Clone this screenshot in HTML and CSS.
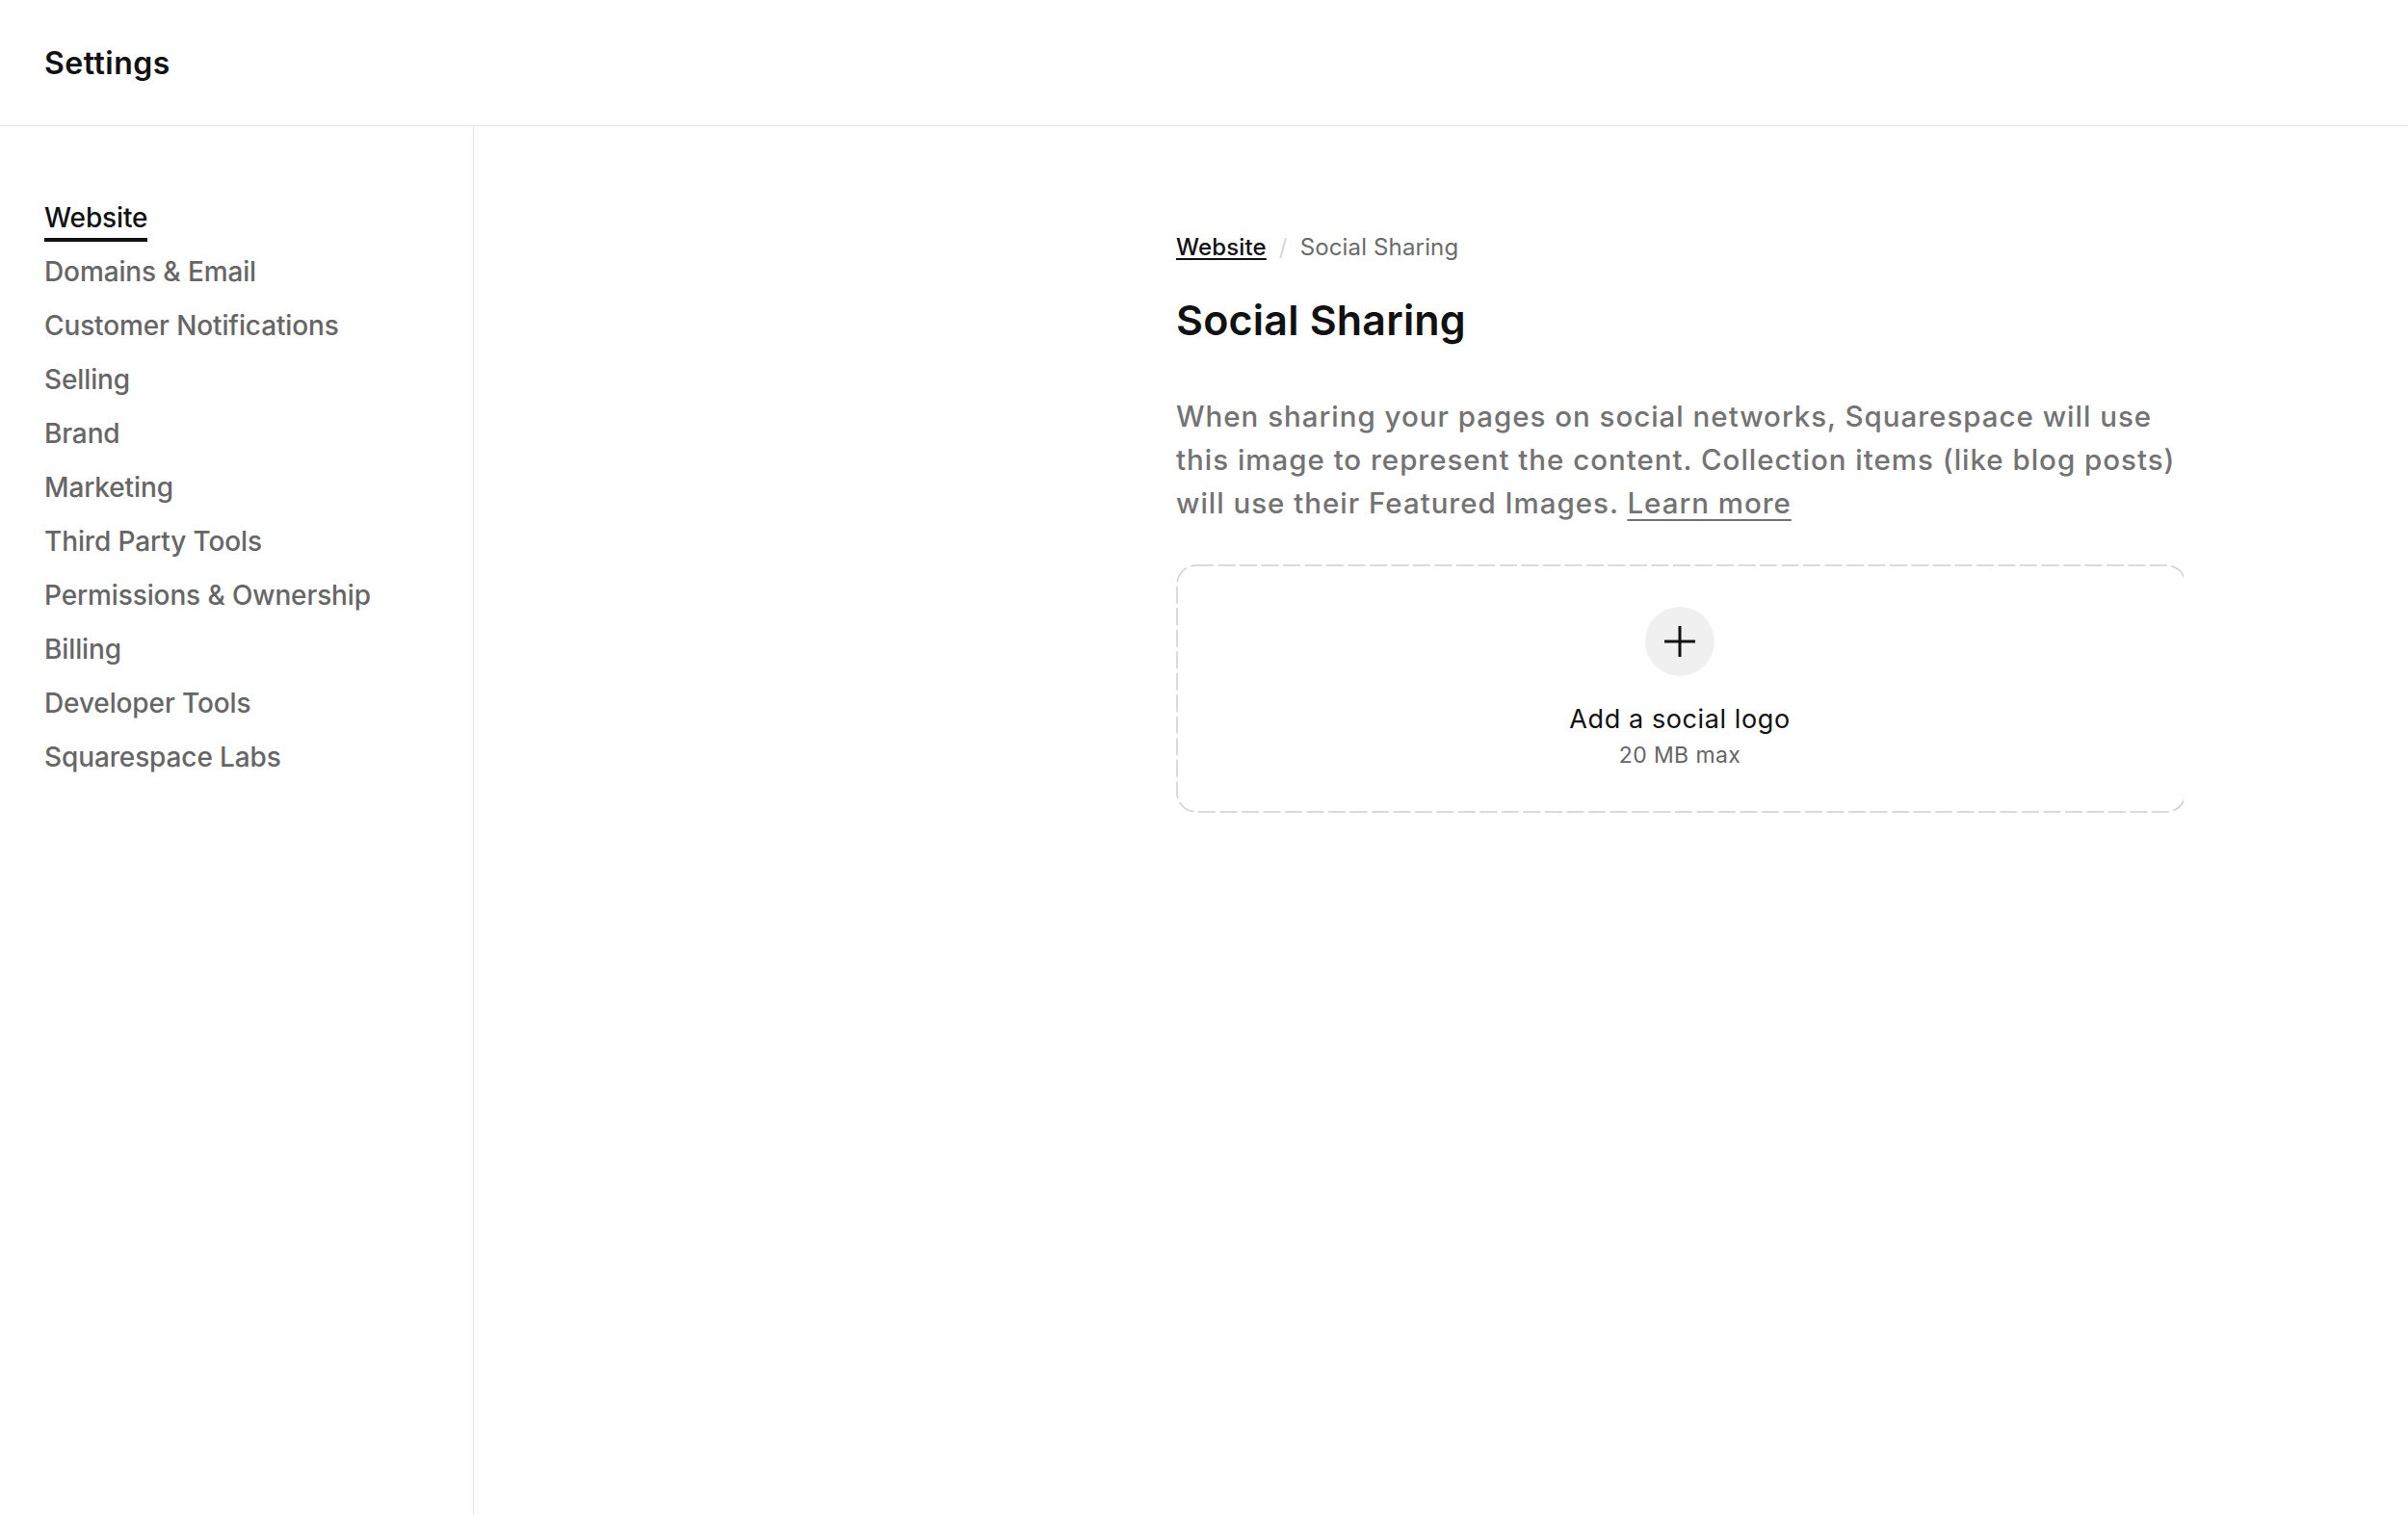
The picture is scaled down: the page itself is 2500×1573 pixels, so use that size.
FILE: index.html
```html
<!DOCTYPE html>
<html lang="en">
<head>
<meta charset="utf-8">
<title>Settings – Social Sharing</title>
<link rel="stylesheet" href="styles.css">
</head>
<body>
  <header class="topbar">
    <h1 class="topbar-title">Settings</h1>
  </header>
  <div class="layout">
    <nav class="sidebar">
      <ul class="nav">
        <li class="nav-item"><a class="nav-link active">Website</a></li>
        <li class="nav-item"><a class="nav-link">Domains &amp; Email</a></li>
        <li class="nav-item"><a class="nav-link">Customer Notifications</a></li>
        <li class="nav-item"><a class="nav-link">Selling</a></li>
        <li class="nav-item"><a class="nav-link">Brand</a></li>
        <li class="nav-item"><a class="nav-link">Marketing</a></li>
        <li class="nav-item"><a class="nav-link">Third Party Tools</a></li>
        <li class="nav-item"><a class="nav-link">Permissions &amp; Ownership</a></li>
        <li class="nav-item"><a class="nav-link">Billing</a></li>
        <li class="nav-item"><a class="nav-link">Developer Tools</a></li>
        <li class="nav-item"><a class="nav-link">Squarespace Labs</a></li>
      </ul>
    </nav>
    <main class="main">
      <div class="content">
        <div class="breadcrumb">
          <a class="crumb-link">Website</a>
          <span class="crumb-sep">/</span>
          <span class="crumb-current">Social Sharing</span>
        </div>
        <h2 class="page-title">Social Sharing</h2>
        <p class="description">When sharing your pages on social networks, Squarespace will use this image to represent the content. Collection items (like blog posts) will use their Featured Images. <a class="learn-more">Learn more</a></p>
        <div class="dropzone">
          <svg class="dropzone-border" width="1046" height="258" viewBox="0 0 1046 258" aria-hidden="true">
            <rect x="1" y="1" width="1047" height="256" rx="20" ry="20" fill="none" stroke="#cfcfcf" stroke-width="1.5" stroke-dasharray="18 4.5"/>
          </svg>
          <div class="add-circle">
            <svg width="32" height="32" viewBox="0 0 32 32" aria-hidden="true">
              <path d="M16 0V32M0 16H32" stroke="#111" stroke-width="3" fill="none"/>
            </svg>
          </div>
          <div class="add-label">Add a social logo</div>
          <div class="add-hint">20 MB max</div>
        </div>
      </div>
    </main>
  </div>
</body>
</html>
```

FILE: styles.css
```css
* { box-sizing: border-box; }

html, body {
  margin: 0;
  padding: 0;
  background: #fff;
}

body {
  font-family: Inter, "Liberation Sans", Arial, sans-serif;
  color: #111;
  width: 2500px;
  height: 1573px;
  overflow: hidden;
}

.topbar {
  height: 131px;
  border-bottom: 1px solid #e5e5e5;
  padding: 0 46px;
  display: flex;
  align-items: center;
}

.topbar-title {
  margin: 0;
  font-size: 32px;
  font-weight: 600;
  letter-spacing: 0.5px;
  line-height: 40px;
  color: #111;
  position: relative;
  top: 1px;
}

.layout {
  display: flex;
  height: 1442px;
}

.sidebar {
  width: 492px;
  flex: 0 0 492px;
  border-right: 1px solid #e5e5e5;
  padding: 75px 0 0 46px;
}

.nav {
  list-style: none;
  margin: 0;
  padding: 0;
}

.nav-item {
  height: 56px;
  font-size: 28px;
  line-height: 40px;
  font-weight: 500;
  letter-spacing: -0.12px;
}

.nav-link {
  color: #666;
  text-decoration: none;
  display: inline-block;
}

.nav-link.active {
  color: #111;
  padding-bottom: 1px;
  border-bottom: 4px solid #111;
}

.main {
  flex: 1;
  padding: 110px 0 0 729px;
}

.content {
  width: 1046px;
}

.breadcrumb {
  display: flex;
  align-items: baseline;
  font-size: 24px;
  line-height: 32px;
  letter-spacing: 0.15px;
}

.crumb-link {
  color: #111;
  font-weight: 500;
  text-decoration: underline;
  text-decoration-thickness: 2px;
  text-underline-offset: 3px;
}

.crumb-sep {
  color: #d8d8d8;
  margin: 0 13px;
}

.crumb-current {
  color: #6b6b6b;
}

.page-title {
  margin: 33px 0 0;
  font-size: 43px;
  line-height: 52px;
  font-weight: 600;
  letter-spacing: 0.2px;
  color: #111;
}

.description {
  margin: 52px 0 0;
  font-size: 29.5px;
  line-height: 45px;
  font-weight: 500;
  letter-spacing: 0.98px;
  color: #737373;
  width: 1058px;
}

.learn-more {
  color: #737373;
  text-decoration: underline;
  text-decoration-thickness: 1.5px;
  text-underline-offset: 6px;
}

.dropzone {
  position: relative;
  margin-top: 41px;
  width: 1046px;
  height: 258px;
  padding-top: 44px;
  display: flex;
  flex-direction: column;
  align-items: center;
}

.dropzone-border {
  position: absolute;
  left: 0;
  top: 0;
}

.add-circle {
  width: 72px;
  height: 72px;
  border-radius: 50%;
  background: #f0f0f0;
  display: flex;
  align-items: center;
  justify-content: center;
}

.add-label {
  margin-top: 27px;
  font-size: 27px;
  line-height: 36px;
  letter-spacing: 0.6px;
  color: #111;
}

.add-hint {
  margin-top: 4px;
  font-size: 23px;
  line-height: 30px;
  letter-spacing: 0.4px;
  color: #666;
}
```
